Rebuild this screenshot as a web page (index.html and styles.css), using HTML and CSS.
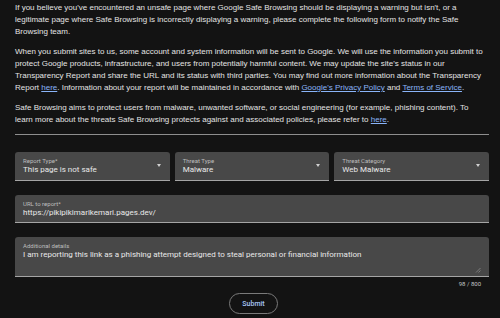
FILE: index.html
```html
<!DOCTYPE html>
<html>
<head>
<meta charset="utf-8">
<link rel="stylesheet" href="styles.css">
</head>
<body>
<div class="page">
  <p>If you believe you've encountered an unsafe page where Google Safe Browsing should be displaying a warning but isn't, or a legitimate page where Safe Browsing is incorrectly displaying a warning, please complete the following form to notify the Safe Browsing team.</p>
  <p>When you submit sites to us, some account and system information will be sent to Google. We will use the information you submit to protect Google products, infrastructure, and users from potentially harmful content. We may update the site's status in our Transparency Report and share the URL and its status with third parties. You may find out more information about the Transparency Report <a href="#">here</a>. Information about your report will be maintained in accordance with <a href="#">Google's Privacy Policy</a> and <a href="#">Terms of Service</a>.</p>
  <p>Safe Browsing aims to protect users from malware, unwanted software, or social engineering (for example, phishing content). To learn more about the threats Safe Browsing protects against and associated policies, please refer to <a href="#">here</a>.</p>
  <hr class="divider">
  <form class="form">
    <div class="row">
      <div class="field select">
        <span class="label">Report Type*</span>
        <span class="value">This page is not safe</span>
        <span class="arrow"></span>
      </div>
      <div class="field select">
        <span class="label">Threat Type</span>
        <span class="value">Malware</span>
        <span class="arrow"></span>
      </div>
      <div class="field select">
        <span class="label">Threat Category</span>
        <span class="value">Web Malware</span>
        <span class="arrow"></span>
      </div>
    </div>
    <div class="field url">
      <span class="label">URL to report*</span>
      <span class="value">https://pikipikimarikemari.pages.dev/</span>
    </div>
    <div class="field area">
      <span class="label">Additional details</span>
      <span class="value">I am reporting this link as a phishing attempt designed to steal personal or financial information</span>
      <svg class="grip" width="6" height="6" viewBox="0 0 6 6"><path d="M5.5 1 L1 5.5 M5.5 3.5 L3.5 5.5" stroke="#8a8a8a" stroke-width="0.8"/></svg>
    </div>
    <div class="counter">98 / 800</div>
    <div class="actions">
      <button type="button" class="submit">Submit</button>
    </div>
  </form>
</div>
</body>
</html>
```
FILE: styles.css
```css
html, body {
  margin: 0;
  padding: 0;
  background: #131313;
}
.page {
  padding: 2px 11px 0 15px;
  font-family: "Liberation Sans", Arial, sans-serif;
  font-size: 8px;
  line-height: 12px;
  color: #e3e3e3;
}
p {
  margin: 0 0 8px 0;
  padding-right: 4px;
}
a {
  color: #8ab4f8;
  text-decoration: underline;
}
.divider {
  margin: 0;
  border: 0;
  border-top: 1px solid #8e8e8e;
  height: 0;
}
.form {
  display: flex;
  flex-direction: column;
  margin-top: 17px;
  font-family: Roboto, "Liberation Sans", sans-serif;
}
.row {
  display: flex;
  gap: 5px;
}
.field {
  position: relative;
  background: #484848;
  border-radius: 3px 3px 0 0;
  border-bottom: 1px solid #a5a5a5;
  display: flex;
  flex-direction: column;
  padding: 5px 8px 0 8px;
  box-sizing: border-box;
}
.select {
  flex: 1;
  height: 29px;
}
.url {
  margin-top: 14px;
  height: 28px;
}
.area {
  margin-top: 14px;
  height: 40px;
}
.label {
  font-size: 6px;
  line-height: 7px;
  color: #bdbdbd;
}
.value {
  font-size: 8px;
  line-height: 12px;
  color: #e8e8e8;
  margin-top: 0;
}
.arrow {
  position: absolute;
  right: 9px;
  top: 12px;
  width: 0;
  height: 0;
  border-left: 2.5px solid transparent;
  border-right: 2.5px solid transparent;
  border-top: 3px solid #d0d0d0;
}
.grip {
  position: absolute;
  right: 8px;
  bottom: 3px;
}
.counter {
  align-self: flex-end;
  margin-right: 8px;
  margin-top: 2px;
  font-size: 6px;
  line-height: 9px;
  color: #c4c4c4;
}
.actions {
  display: flex;
  justify-content: center;
  margin-top: 5px;
}
.submit {
  width: 49px;
  height: 21px;
  border-radius: 11px;
  border: 1px solid #7a7a7a;
  background: transparent;
  color: #a8c7fa;
  font-family: Roboto, "Liberation Sans", sans-serif;
  font-size: 7px;
  font-weight: 500;
  padding: 0;
  margin-left: 3px;
}
```
